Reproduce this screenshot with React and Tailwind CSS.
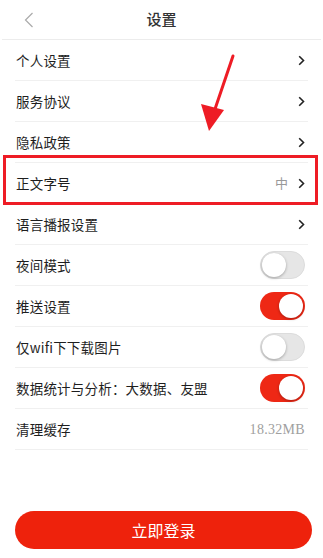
import React from 'react';

const rows = [
  { label: '个人设置', type: 'arrow' },
  { label: '服务协议', type: 'arrow' },
  { label: '隐私政策', type: 'arrow' },
  { label: '正文字号', type: 'arrow', value: '中', boxed: true },
  { label: '语言播报设置', type: 'arrow' },
  { label: '夜间模式', type: 'toggle', on: false },
  { label: '推送设置', type: 'toggle', on: true },
  { label: '仅wifi下下载图片', type: 'toggle', on: false },
  { label: '数据统计与分析：大数据、友盟', type: 'toggle', on: true },
  { label: '清理缓存', type: 'value', value: '18.32MB' },
];

function Chevron() {
  return (
    <svg width="7" height="11" viewBox="0 0 7 11" className="ml-[7px]">
      <path d="M1.2 1.2 L5.5 5.5 L1.2 9.8" fill="none" stroke="#222" strokeWidth="1.6" />
    </svg>
  );
}

function Toggle({ on }) {
  return (
    <div
      className={
        on
          ? 'w-[45px] h-[28px] rounded-full bg-[#ee2815] flex items-center justify-end px-[2px]'
          : 'w-[45px] h-[28px] rounded-full bg-[#e6e6e6] border border-[#dcdcdc] flex items-center justify-start px-[1px]'
      }
    >
      <div className="w-[24px] h-[24px] rounded-full bg-white shadow-[0_1px_3px_rgba(0,0,0,0.3)]" />
    </div>
  );
}

export default function App() {
  return (
    <div
      className="relative w-[323px] h-[558px] bg-white text-[#1e1e1e] overflow-hidden flex flex-col"
      style={{ fontFamily: '"Noto Sans CJK SC", "Noto Sans", sans-serif' }}
    >
      <div className="relative h-[40px] flex items-center justify-center border-b border-[#ececec] mx-[2px]">
        <svg width="10" height="16" viewBox="0 0 10 16" className="absolute left-[22px] top-[12px]">
          <path d="M8.5 1 L1.5 8 L8.5 15" fill="none" stroke="#aaa" strokeWidth="1.2" />
        </svg>
        <span className="text-[15px] text-[#333] font-medium">设置</span>
      </div>

      <div className="flex flex-col">
        {rows.map((r, i) => (
          <div key={i} className="relative px-[15px]">
            <div className="h-[41px] flex items-center justify-between border-b border-[#f0f0f0] pl-[1px] pr-[3px]">
              <span className="text-[13.5px] tracking-[0.2px]">{r.label}</span>
              <div className="flex items-center">
                {r.type === 'arrow' && r.value && (
                  <span className="text-[13px] text-[#999] mr-[3px]">{r.value}</span>
                )}
                {r.type === 'arrow' && <Chevron />}
                {r.type === 'toggle' && <Toggle on={r.on} />}
                {r.type === 'value' && (
                  <span
                    className="text-[14px] text-[#a0a0a0] tracking-[0.3px]"
                    style={{ fontFamily: '"Liberation Serif", serif' }}
                  >
                    {r.value}
                  </span>
                )}
              </div>
            </div>
            {r.boxed && (
              <div className="absolute left-[3px] right-[5px] top-[-8px] bottom-[-1px] border-[3px] border-[#ee1c25]" />
            )}
          </div>
        ))}
      </div>

      <div className="mt-auto mb-[9px] px-[15px]">
        <button className="w-[297px] h-[38px] rounded-full bg-[#ee220c] text-white text-[16px] flex items-center justify-center">
          立即登录
        </button>
      </div>

      <svg className="absolute left-0 top-0" width="323" height="558" viewBox="0 0 323 558">
        <line x1="233" y1="56" x2="214" y2="112" stroke="#ee1c25" strokeWidth="3" strokeLinecap="round" />
        <polygon points="201,104 224,110 209,131" fill="#ee1c25" />
      </svg>
    </div>
  );
}
